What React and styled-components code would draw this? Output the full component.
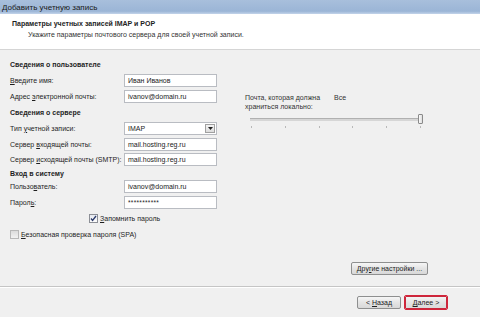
import React from 'react';
import styled, { createGlobalStyle } from 'styled-components';

const GlobalStyle = createGlobalStyle`
  html, body {
    margin: 0;
    padding: 0;
    background: #f0f0f0;
  }
  body {
    font-family: "Liberation Sans", "DejaVu Sans", sans-serif;
    font-size: 7px;
    color: #1e1e1e;
  }
`;

const ticks = [0, 1, 2, 3, 4, 5];

const App = () => {
  const userFields = [
    { id: 'name', label: <><U>В</U>ведите имя:</>, value: 'Иван Иванов' },
    { id: 'mail', label: <>Адрес <U>э</U>лектронной почты:</>, value: 'ivanov@domain.ru' },
  ];

  return (
    <Window>
      <GlobalStyle />
      <TitleBar>Добавить учетную запись</TitleBar>
      <Header>
        <HeaderTitle>Параметры учетных записей IMAP и POP</HeaderTitle>
        <HeaderText>Укажите параметры почтового сервера для своей учетной записи.</HeaderText>
      </Header>

      <Body>
        <FormColumn>
          <Row h={16}><Heading>Сведения о пользователе</Heading></Row>
          {userFields.map(f => (
            <Row h={16} key={f.id}>
              <Label>{f.label}</Label>
              <Input>{f.value}</Input>
            </Row>
          ))}
          <Row h={16}><Heading>Сведения о сервере</Heading></Row>
          <Row h={16}>
            <Label>Тип <U>у</U>четной записи:</Label>
            <Select>
              IMAP
              <DropButton>
                <svg width="5" height="3" viewBox="0 0 5 3"><path d="M0 0h5L2.5 3z" fill="#222" /></svg>
              </DropButton>
            </Select>
          </Row>
          <Row h={16}>
            <Label>Сервер <U>в</U>ходящей почты:</Label>
            <Input>mail.hosting.reg.ru</Input>
          </Row>
          <Row h={15}>
            <Label>Сервер <U>и</U>сходящей почты (SMTP):</Label>
            <Input>mail.hosting.reg.ru</Input>
          </Row>
          <Row h={12}><Heading>Вход в систему</Heading></Row>
          <Row h={15}>
            <Label>Пользо<U>в</U>атель:</Label>
            <Input>ivanov@domain.ru</Input>
          </Row>
          <Row h={16}>
            <Label>Парол<U>ь</U>:</Label>
            <Input password>***********</Input>
          </Row>
          <Row h={16}>
            <CheckRow indent={79}>
              <Checkbox checked>
                <svg width="7" height="7" viewBox="0 0 7 7"><path d="M1 3.5l1.6 2L6 1" stroke="#2a3a6a" strokeWidth="1.3" fill="none" /></svg>
              </Checkbox>
              <span><U>З</U>апомнить пароль</span>
            </CheckRow>
          </Row>
          <Row h={17}>
            <CheckRow>
              <Checkbox />
              <span><U>Б</U>езопасная проверка пароля (SPA)</span>
            </CheckRow>
          </Row>
        </FormColumn>

        <SideColumn>
          <SliderCaption>
            <span>Почта, которая должна<br />храниться локально:</span>
            <span>Все</span>
          </SliderCaption>
          <Slider>
            <Track />
            <Thumb />
          </Slider>
          <Ticks>
            {ticks.map(t => <Tick key={t} />)}
          </Ticks>
        </SideColumn>
      </Body>

      <MoreRow>
        <Button width={77}><span>Дру<U>г</U>ие настройки ...</span></Button>
      </MoreRow>

      <Footer>
        <Button width={44}><span>&lt; <U>Н</U>азад</span></Button>
        <Button width={44} primary><span><U>Д</U>алее &gt;</span></Button>
      </Footer>
    </Window>
  );
};

const Window = styled.div`
  width: 480px;
  height: 317px;
  overflow: hidden;
  background: #f0f0f0;
  display: flex;
  flex-direction: column;
`;

const TitleBar = styled.div`
  height: 14px;
  box-sizing: border-box;
  padding: 1px 0 0 2px;
  line-height: 13px;
  font-size: 8px;
  color: #1a1a1a;
  background: linear-gradient(#a8bfdc, #9bb5d6 80%, #c3d4ea);
`;

const Header = styled.div`
  height: 36px;
  box-sizing: border-box;
  padding: 5px 0 0 12px;
  background: #fff;
  border-bottom: 1px solid #d5d5d5;
`;

const HeaderTitle = styled.div`
  font-weight: bold;
  line-height: 10px;
`;

const HeaderText = styled.div`
  padding-left: 16px;
  line-height: 11px;
  color: #333;
`;

const Body = styled.div`
  display: flex;
  padding-top: 6px;
`;

const FormColumn = styled.div`
  width: 230px;
  padding-left: 10px;
  display: flex;
  flex-direction: column;
`;

const Row = styled.div`
  height: ${p => p.h}px;
  display: flex;
  align-items: center;
`;

const Heading = styled.div`
  font-weight: bold;
`;

const Label = styled.div`
  width: 114px;
  white-space: nowrap;
`;

const U = styled.span`
  text-decoration: underline;
`;

const Input = styled.div`
  width: 93px;
  height: 13px;
  box-sizing: border-box;
  border: 1px solid #b9bcc2;
  background: #fff;
  padding-left: 3px;
  line-height: 11px;
  color: #222;
  letter-spacing: ${p => (p.password ? '0.3px' : '0')};
  font-size: ${p => (p.password ? '6.5px' : '7px')};
`;

const Select = styled(Input)`
  display: flex;
  align-items: center;
  justify-content: space-between;
  padding-right: 1px;
`;

const DropButton = styled.div`
  width: 10px;
  height: 9px;
  box-sizing: border-box;
  border: 1px solid #a0a0a0;
  background: linear-gradient(#f4f4f4, #dcdcdc);
  display: flex;
  align-items: center;
  justify-content: center;
`;

const CheckRow = styled.div`
  display: flex;
  align-items: center;
  gap: 2px;
  padding-left: ${p => p.indent || 0}px;
`;

const Checkbox = styled.div`
  width: 9px;
  height: 9px;
  box-sizing: border-box;
  border: 1px solid ${p => (p.checked ? '#8c8f96' : '#b8b8b8')};
  background: ${p => (p.checked ? 'linear-gradient(#e6e9f0, #fdfdfd)' : 'linear-gradient(#dcdcdc, #f2f2f2)')};
  display: flex;
  align-items: center;
  justify-content: center;
`;

const SideColumn = styled.div`
  padding: 37px 0 0 5px;
  width: 190px;
`;

const SliderCaption = styled.div`
  display: flex;
  gap: 14px;
  line-height: 9px;
  color: #333;
`;

const Slider = styled.div`
  position: relative;
  margin: 3px 0 0 5px;
  width: 173px;
  height: 10px;
  display: flex;
  align-items: center;
`;

const Track = styled.div`
  width: 170px;
  height: 2px;
  background: #d6d6d6;
  border-top: 1px solid #b0b0b0;
`;

const Thumb = styled.div`
  position: absolute;
  left: 168px;
  top: 0;
  width: 5px;
  height: 10px;
  box-sizing: border-box;
  border: 1px solid #8a8a8a;
  border-radius: 1px;
  background: linear-gradient(90deg, #fbfbfb, #dedede);
`;

const Ticks = styled.div`
  display: flex;
  justify-content: space-between;
  width: 170px;
  margin: 2px 0 0 6px;
`;

const Tick = styled.div`
  width: 1px;
  height: 2px;
  background: #b8b8b8;
`;

const MoreRow = styled.div`
  display: flex;
  justify-content: flex-end;
  padding: 19px 52px 0 0;
  height: 24px;
  border-bottom: 1px solid #c5c5c5;
  box-shadow: 0 1px 0 #fff;
`;

const Footer = styled.div`
  display: flex;
  justify-content: flex-end;
  gap: 3px;
  padding: 9px 32px 0 0;
`;

const Button = styled.div`
  width: ${p => p.width}px;
  height: ${p => (p.primary ? 15 : 13)}px;
  box-sizing: border-box;
  margin-top: ${p => (p.primary ? -1 : 0)}px;
  border: 1px solid ${p => (p.primary ? '#d3243a' : '#8e8f8f')};
  outline: ${p => (p.primary ? '1px solid #c8283c' : 'none')};
  outline-offset: -2px;
  border-radius: 2px;
  background: linear-gradient(#f6f6f6, #e4e4e4 50%, #d8d8d8);
  display: flex;
  align-items: center;
  justify-content: center;
  white-space: nowrap;
  color: #222;
`;

export default App;
